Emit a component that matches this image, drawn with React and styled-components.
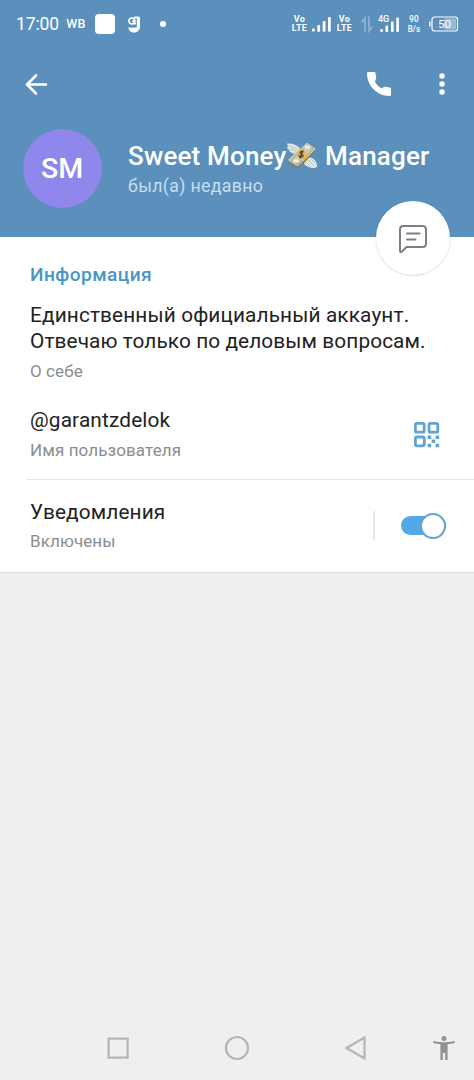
import React, { useState } from "react"
import styled, { createGlobalStyle } from "styled-components"

const GlobalStyle = createGlobalStyle`
    * {
        box-sizing: border-box;
    }

    body {
        margin: 0;
        background-color: #efefef;
        font-family: Roboto, "Noto Sans", sans-serif;
    }

    svg {
        display: block;
        flex-shrink: 0;
    }

    button {
        padding: 0;
        border: none;
        background: none;
        cursor: pointer;
    }
`

const Screen = styled.div`
    display: flex;
    flex-direction: column;
    width: 474px;
    height: 1080px;
    background-color: #efefef;
    overflow: hidden;
`

const Header = styled.header`
    position: relative;
    height: 237px;
    background-color: #5b8fbc;
    color: #ffffff;
`

const StatusBar = styled.div`
    display: flex;
    align-items: center;
    justify-content: space-between;
    height: 48px;
    padding: 0 15px 0 16px;
`

const StatusGroup = styled.div`
    display: flex;
    align-items: center;
`

const StatusItem = styled.div`
    display: flex;
    flex-direction: column;
    align-items: center;
    width: ${(props) => props.$width}px;
    margin-left: ${(props) => props.$gap || 0}px;
`

const Clock = styled.span`
    font-size: 17.5px;
    line-height: 20px;
    letter-spacing: -0.1px;
    white-space: nowrap;
`

const Carrier = styled.span`
    font-size: 12.5px;
    font-weight: 500;
    line-height: 16px;
    letter-spacing: 0.3px;
    white-space: nowrap;
`

const TinyText = styled.span`
    font-size: ${(props) => props.$size}px;
    font-weight: ${(props) => props.$weight || 500};
    line-height: ${(props) => props.$line}px;
    letter-spacing: ${(props) => props.$spacing || 0}px;
    white-space: nowrap;
`

const WhiteSquare = styled.div`
    width: 20px;
    height: 20px;
    border-radius: 4px;
    background-color: #ffffff;
`

const Dot = styled.div`
    width: 5.5px;
    height: 5.5px;
    border-radius: 50%;
    background-color: #ffffff;
`

const Toolbar = styled.div`
    display: flex;
    align-items: center;
    justify-content: space-between;
    height: 72px;
    padding: 0 20px;
`

const ToolbarActions = styled.div`
    display: flex;
    align-items: center;
    gap: 35px;
`

const IconButton = styled.button`
    display: flex;
    align-items: center;
    justify-content: center;
    width: ${(props) => props.$width || 32}px;
    height: 32px;
    margin-top: ${(props) => props.$top || 0}px;
`

const Profile = styled.div`
    display: flex;
    align-items: flex-start;
    padding: 9px 22px 0 22.5px;
`

const Avatar = styled.div`
    display: flex;
    align-items: center;
    justify-content: center;
    width: 79px;
    height: 79px;
    border-radius: 50%;
    background-color: #9087ec;
    font-size: 28.5px;
    font-weight: 500;
`

const ProfileText = styled.div`
    display: flex;
    flex-direction: column;
    margin: 11px 0 0 26.5px;
`

const Name = styled.h1`
    display: flex;
    align-items: center;
    margin: 0;
    font-size: 26px;
    font-weight: 500;
    line-height: 32px;
    letter-spacing: 0.18px;
    white-space: nowrap;
`

const Seen = styled.span`
    margin-top: 3px;
    color: #c6def0;
    font-size: 17.7px;
    line-height: 22px;
    letter-spacing: 0.35px;
`

const MessageButton = styled.button`
    position: absolute;
    right: 24px;
    bottom: -37.5px;
    display: flex;
    align-items: center;
    justify-content: center;
    width: 74px;
    height: 74px;
    padding: 2px 0 0;
    border-radius: 50%;
    background-color: #ffffff;
    box-shadow: 0 0.5px 2px rgba(0, 0, 0, 0.2);
`

const Card = styled.main`
    height: 335px;
    background-color: #ffffff;
    box-shadow: 0 1px 1px rgba(0, 0, 0, 0.08);
`

const SectionTitle = styled.h2`
    height: 63px;
    margin: 0;
    padding: 26px 30px 0;
    color: #4895c5;
    font-size: 19.2px;
    font-weight: 500;
    line-height: 24px;
    letter-spacing: 0.4px;
`

const Row = styled.div`
    display: flex;
    align-items: ${(props) => props.$align || "flex-start"};
    justify-content: space-between;
    height: ${(props) => props.$height}px;
    padding: ${(props) => props.$padding};
`

const RowText = styled.div`
    display: flex;
    flex-direction: column;
`

const Value = styled.span`
    color: #222222;
    font-size: 20.8px;
    line-height: 25.5px;
    letter-spacing: ${(props) => props.$spacing || 0}px;
    white-space: nowrap;
`

const Label = styled.span`
    margin-top: ${(props) => props.$top || 6}px;
    color: #8a8d90;
    font-size: 17px;
    line-height: 20px;
    letter-spacing: 0.1px;
    white-space: nowrap;
`

const Divider = styled.div`
    height: 1px;
    margin-left: 26px;
    background-color: #e6e6e6;
`

const SwitchArea = styled.div`
    display: flex;
    align-items: center;
    height: 30px;
    padding-left: 26px;
    border-left: 2px solid #e8e9ea;
`

const Track = styled.button`
    display: flex;
    align-items: center;
    justify-content: ${(props) => (props.$on ? "flex-end" : "flex-start")};
    width: 45px;
    height: 19px;
    border-radius: 10px;
    background-color: ${(props) => (props.$on ? "#52a9e6" : "#b0b5ba")};
`

const Thumb = styled.span`
    flex-shrink: 0;
    width: 26px;
    height: 26px;
    border: 2px solid #62a3d0;
    border-radius: 50%;
    background-color: #ffffff;
`

const NavBar = styled.nav`
    display: grid;
    grid-template-columns: 118px 120px 118px 58px;
    align-items: center;
    justify-items: center;
    height: 64px;
    margin-top: auto;
    padding-left: 59px;
`

const VoLte = ({ gap }) => (
    <StatusItem $width={17} $gap={gap}>
        <TinyText $size={9} $line={9} $weight={700} $spacing={0.3}>Vo</TinyText>
        <TinyText $size={9} $line={9} $weight={700} $spacing={0.3}>LTE</TinyText>
    </StatusItem>
)

const SignalBars = () => (
    <svg width="19" height="15" viewBox="0 0 19 15" fill="#fff">
        <rect x="0" y="11.6" width="2.8" height="3" rx="1" />
        <rect x="5.3" y="8" width="2.8" height="6.8" rx="1" />
        <rect x="10.7" y="4" width="2.8" height="10.8" rx="1" />
        <rect x="16" y="0" width="2.8" height="14.8" rx="1" />
    </svg>
)

const MoneyIcon = () => (
    <svg width="32" height="29" viewBox="0 0 32 29">
        <path d="M1 1.5C5 1 10 2 14 6L11 12C8 12 4 11 3 8C1 7 .5 5 2 4.500Z" fill="#dde4df" />
        <path d="M3 4L11 7M4 7L10 9" stroke="#b5c4c7" strokeWidth="1" />
        <path d="M31 25C28 27 22 26 18 22L20 16C25 14 31 17 31 25Z" fill="#e4e8e2" />
        <path d="M22 18L28 24M20 20L25 25M25 17L29 21" stroke="#b5c4c7" strokeWidth="1" />
        <path d="M2 18L21 .8L30 7L12 26Z" fill="#a5a992" />
        <path d="M2 20L11 24L29 8L29 10L12 27L2 22Z" fill="#788477" />
        <path d="M2 18L21 .8L29.500 7L12 24Z" fill="#c9ccb2" />
        <path d="M5 18L21 3L27 7L12 22Z" fill="none" stroke="#8f9987" strokeWidth=".8" />
        <ellipse cx="21.500" cy="5" rx="3" ry="1.800" fill="#eeeedb" />
        <ellipse cx="10" cy="19" rx="3" ry="1.800" fill="#eeeedb" />
        <path d="M9.500 10.500L14.500 6.500L22.500 13L22 17L18 19.500Z" fill="#e3b95f" />
        <path d="M18 18L22.500 14L22 17L18 21Z" fill="#b98833" />
        <path d="M17.500 10C15 8.500 13 11 15 12S18 14 16 15S12.500 14 13 13M17 8.500L14 16.500" fill="none" stroke="#4d412b" strokeWidth="1.300" />
    </svg>
)

const App = () => {
    const [notifications, setNotifications] = useState(true)

    return (
        <Screen>
            <GlobalStyle />
            <Header>
                <StatusBar>
                    <StatusGroup>
                        <StatusItem $width={43}>
                            <Clock>17:00</Clock>
                        </StatusItem>
                        <StatusItem $width={20} $gap={7}>
                            <Carrier>WB</Carrier>
                        </StatusItem>
                        <StatusItem $width={20} $gap={9}>
                            <WhiteSquare />
                        </StatusItem>
                        <StatusItem $width={12} $gap={13}>
                            <svg width="12" height="17" viewBox="0 0 12 17">
                                <path d="M6 .5H10.500Q12 .5 12 2V10.500C12 14 9.500 16.500 6 16.500C3 16.500 .5 14.500 .3 11.500H8.500V2.500H6Z" fill="#fff" />
                                <circle cx="3.900" cy="5" r="3" fill="none" stroke="#fff" strokeWidth="1.700" />
                                <path d="M4 5H6.500V7.800H8" fill="none" stroke="#fff" strokeWidth="1.500" />
                                <path d="M8.300 2.500V10.700H2.500" fill="none" stroke="#5b8fbc" strokeWidth=".9" />
                            </svg>
                        </StatusItem>
                        <StatusItem $width={6} $gap={20}>
                            <Dot />
                        </StatusItem>
                    </StatusGroup>
                    <StatusGroup>
                        <VoLte />
                        <StatusItem $width={19} $gap={4}>
                            <SignalBars />
                        </StatusItem>
                        <VoLte gap={5} />
                        <StatusItem $width={12} $gap={8}>
                            <svg width="12" height="17" viewBox="0 0 12 17" fill="none" stroke="#8db2d2" strokeWidth="1.800">
                                <path d="M4 16.500V2L.5 6.500M8 .5V15L11.500 10.500" />
                            </svg>
                        </StatusItem>
                        <StatusItem $width={22} $gap={5}>
                            <svg width="22" height="20" viewBox="0 0 22 20" fill="#fff">
                                <text x="0" y="7.500" fontSize="9" fontWeight="500">4G</text>
                                <rect x="2.300" y="15" width="2.600" height="3" rx="1" />
                                <rect x="7.500" y="11.400" width="2.600" height="6.600" rx="1" />
                                <rect x="13" y="7.400" width="2.600" height="10.600" rx="1" />
                                <rect x="18.300" y="3.400" width="2.600" height="14.600" rx="1" />
                            </svg>
                        </StatusItem>
                        <StatusItem $width={14} $gap={7}>
                            <TinyText $size={8.2} $line={10}>90</TinyText>
                            <TinyText $size={8.2} $line={10}>B/s</TinyText>
                        </StatusItem>
                        <StatusItem $width={30} $gap={8}>
                            <svg width="30" height="16" viewBox="0 0 30 16">
                                <rect x="3" y="1" width="25.500" height="14" rx="2.500" fill="none" stroke="#fff" strokeWidth="1.200" />
                                <rect x="15" y="2.500" width="12" height="11" rx="1" fill="#fff" opacity=".4" />
                                <path d="M.8 5.500V10.500" stroke="#fff" strokeWidth="1.500" />
                                <text x="9" y="12" fontSize="11.500" fill="#fff">50</text>
                            </svg>
                        </StatusItem>
                    </StatusGroup>
                </StatusBar>

                <Toolbar>
                    <IconButton aria-label="Назад">
                        <svg width="24" height="24" viewBox="0 0 24 24" fill="none" stroke="#fff" strokeWidth="2.600" strokeLinecap="round" strokeLinejoin="round">
                            <path d="M22 12.500H3M12 3.500L3 12.500L12 21.500" />
                        </svg>
                    </IconButton>
                    <ToolbarActions>
                        <IconButton aria-label="Позвонить">
                            <svg width="32" height="32" viewBox="0 0 24 24" fill="#fff">
                                <path d="M8.900 10.200C10 12.400 11.700 14.100 13.900 15.200L15.800 14.300C16.200 14.100 16.600 14 17.100 14.100L20.200 14.700C20.700 14.800 21 15.200 21 15.700V20C21 20.600 20.600 21 20 21C10.600 21 3 13.400 3 4C3 3.400 3.400 3 4 3H8.300C8.800 3 9.200 3.300 9.300 3.800L9.900 7C10 7.400 9.900 7.900 9.700 8.200Z" />
                            </svg>
                        </IconButton>
                        <IconButton $width={24} aria-label="Меню">
                            <svg width="6" height="22" viewBox="0 0 6 22" fill="#fff">
                                <circle cx="3" cy="3" r="2.700" />
                                <circle cx="3" cy="11" r="2.700" />
                                <circle cx="3" cy="19" r="2.700" />
                            </svg>
                        </IconButton>
                    </ToolbarActions>
                </Toolbar>

                <Profile>
                    <Avatar>SM</Avatar>
                    <ProfileText>
                        <Name>
                            <span>Sweet Money</span>
                            <MoneyIcon />
                            <span>&nbsp;Manager</span>
                        </Name>
                        <Seen>был(а) недавно</Seen>
                    </ProfileText>
                </Profile>

                <MessageButton aria-label="Сообщение">
                    <svg width="30" height="30" viewBox="0 0 30 30" fill="none" stroke="#7b8086" strokeWidth="2" strokeLinecap="round" strokeLinejoin="round">
                        <path d="M5 2H24.500Q28 2 28 5.500V19.500Q28 23 24.500 23H8.500L4 27.500Q2 29.300 2 26.500V5.500Q2 2 5 2Z" />
                        <path d="M9 9.500H21.500M9 15.500H17.500" />
                    </svg>
                </MessageButton>
            </Header>

            <Card>
                <SectionTitle>Информация</SectionTitle>
                <Row $height={108} $padding="3px 30px 0">
                    <RowText>
                        <Value $spacing={0.13}>Единственный официальный аккаунт.</Value>
                        <Value $spacing={0.1}>Отвечаю только по деловым вопросам.</Value>
                        <Label $top={7}>О себе</Label>
                    </RowText>
                </Row>
                <Row $height={71} $padding="0 34px 0 30px">
                    <RowText>
                        <Value $spacing={0.15}>@garantzdelok</Value>
                        <Label>Имя пользователя</Label>
                    </RowText>
                    <IconButton $width={27} $top={10} aria-label="QR-код">
                        <svg width="27" height="27" viewBox="0 0 27 27" fill="none" stroke="#62a3d0" strokeWidth="2.800">
                            <rect x="2.400" y="2.400" width="8.800" height="8.800" rx="1.500" />
                            <rect x="16" y="2.400" width="8.800" height="8.800" rx="1.500" />
                            <rect x="2.400" y="16" width="8.800" height="8.800" rx="1.500" />
                            <path d="M14.700 16.300H18.200M22.600 16.300H26.100M18.600 20.300H22.200M14.700 24.500H18.200M22.600 24.500H26.100" strokeWidth="3.400" />
                        </svg>
                    </IconButton>
                </Row>
                <Divider />
                <Row $height={91} $padding="0 28px 0 30px" $align="center">
                    <RowText>
                        <Value $spacing={0.13}>Уведомления</Value>
                        <Label>Включены</Label>
                    </RowText>
                    <SwitchArea>
                        <Track
                            role="switch"
                            aria-checked={notifications}
                            $on={notifications}
                            onClick={() => setNotifications(!notifications)}
                        >
                            <Thumb />
                        </Track>
                    </SwitchArea>
                </Row>
            </Card>

            <NavBar>
                <svg width="24" height="24" viewBox="0 0 24 24" fill="none" stroke="#b5b5b5" strokeWidth="2.200">
                    <rect x="2.600" y="2.600" width="19" height="19" />
                </svg>
                <svg width="26" height="26" viewBox="0 0 26 26" fill="none" stroke="#b5b5b5" strokeWidth="2.200">
                    <circle cx="13" cy="13" r="11" />
                </svg>
                <svg width="24" height="26" viewBox="0 0 24 26" fill="none" stroke="#b5b5b5" strokeWidth="2.200">
                    <path d="M20.500 2.500V23.500L2.500 13Z" />
                </svg>
                <svg width="22" height="24" viewBox="0 0 22 24" fill="#929292">
                    <circle cx="11" cy="2.600" r="2.500" />
                    <path d="M.4 4.900Q11 7.400 21.600 4.900L21.900 7Q18.500 7.800 14.600 8.200V24H12.200V17H9.800V24H7.400V8.200Q3.500 7.800 .1 7Z" />
                </svg>
            </NavBar>
        </Screen>
    )
}

export default App
